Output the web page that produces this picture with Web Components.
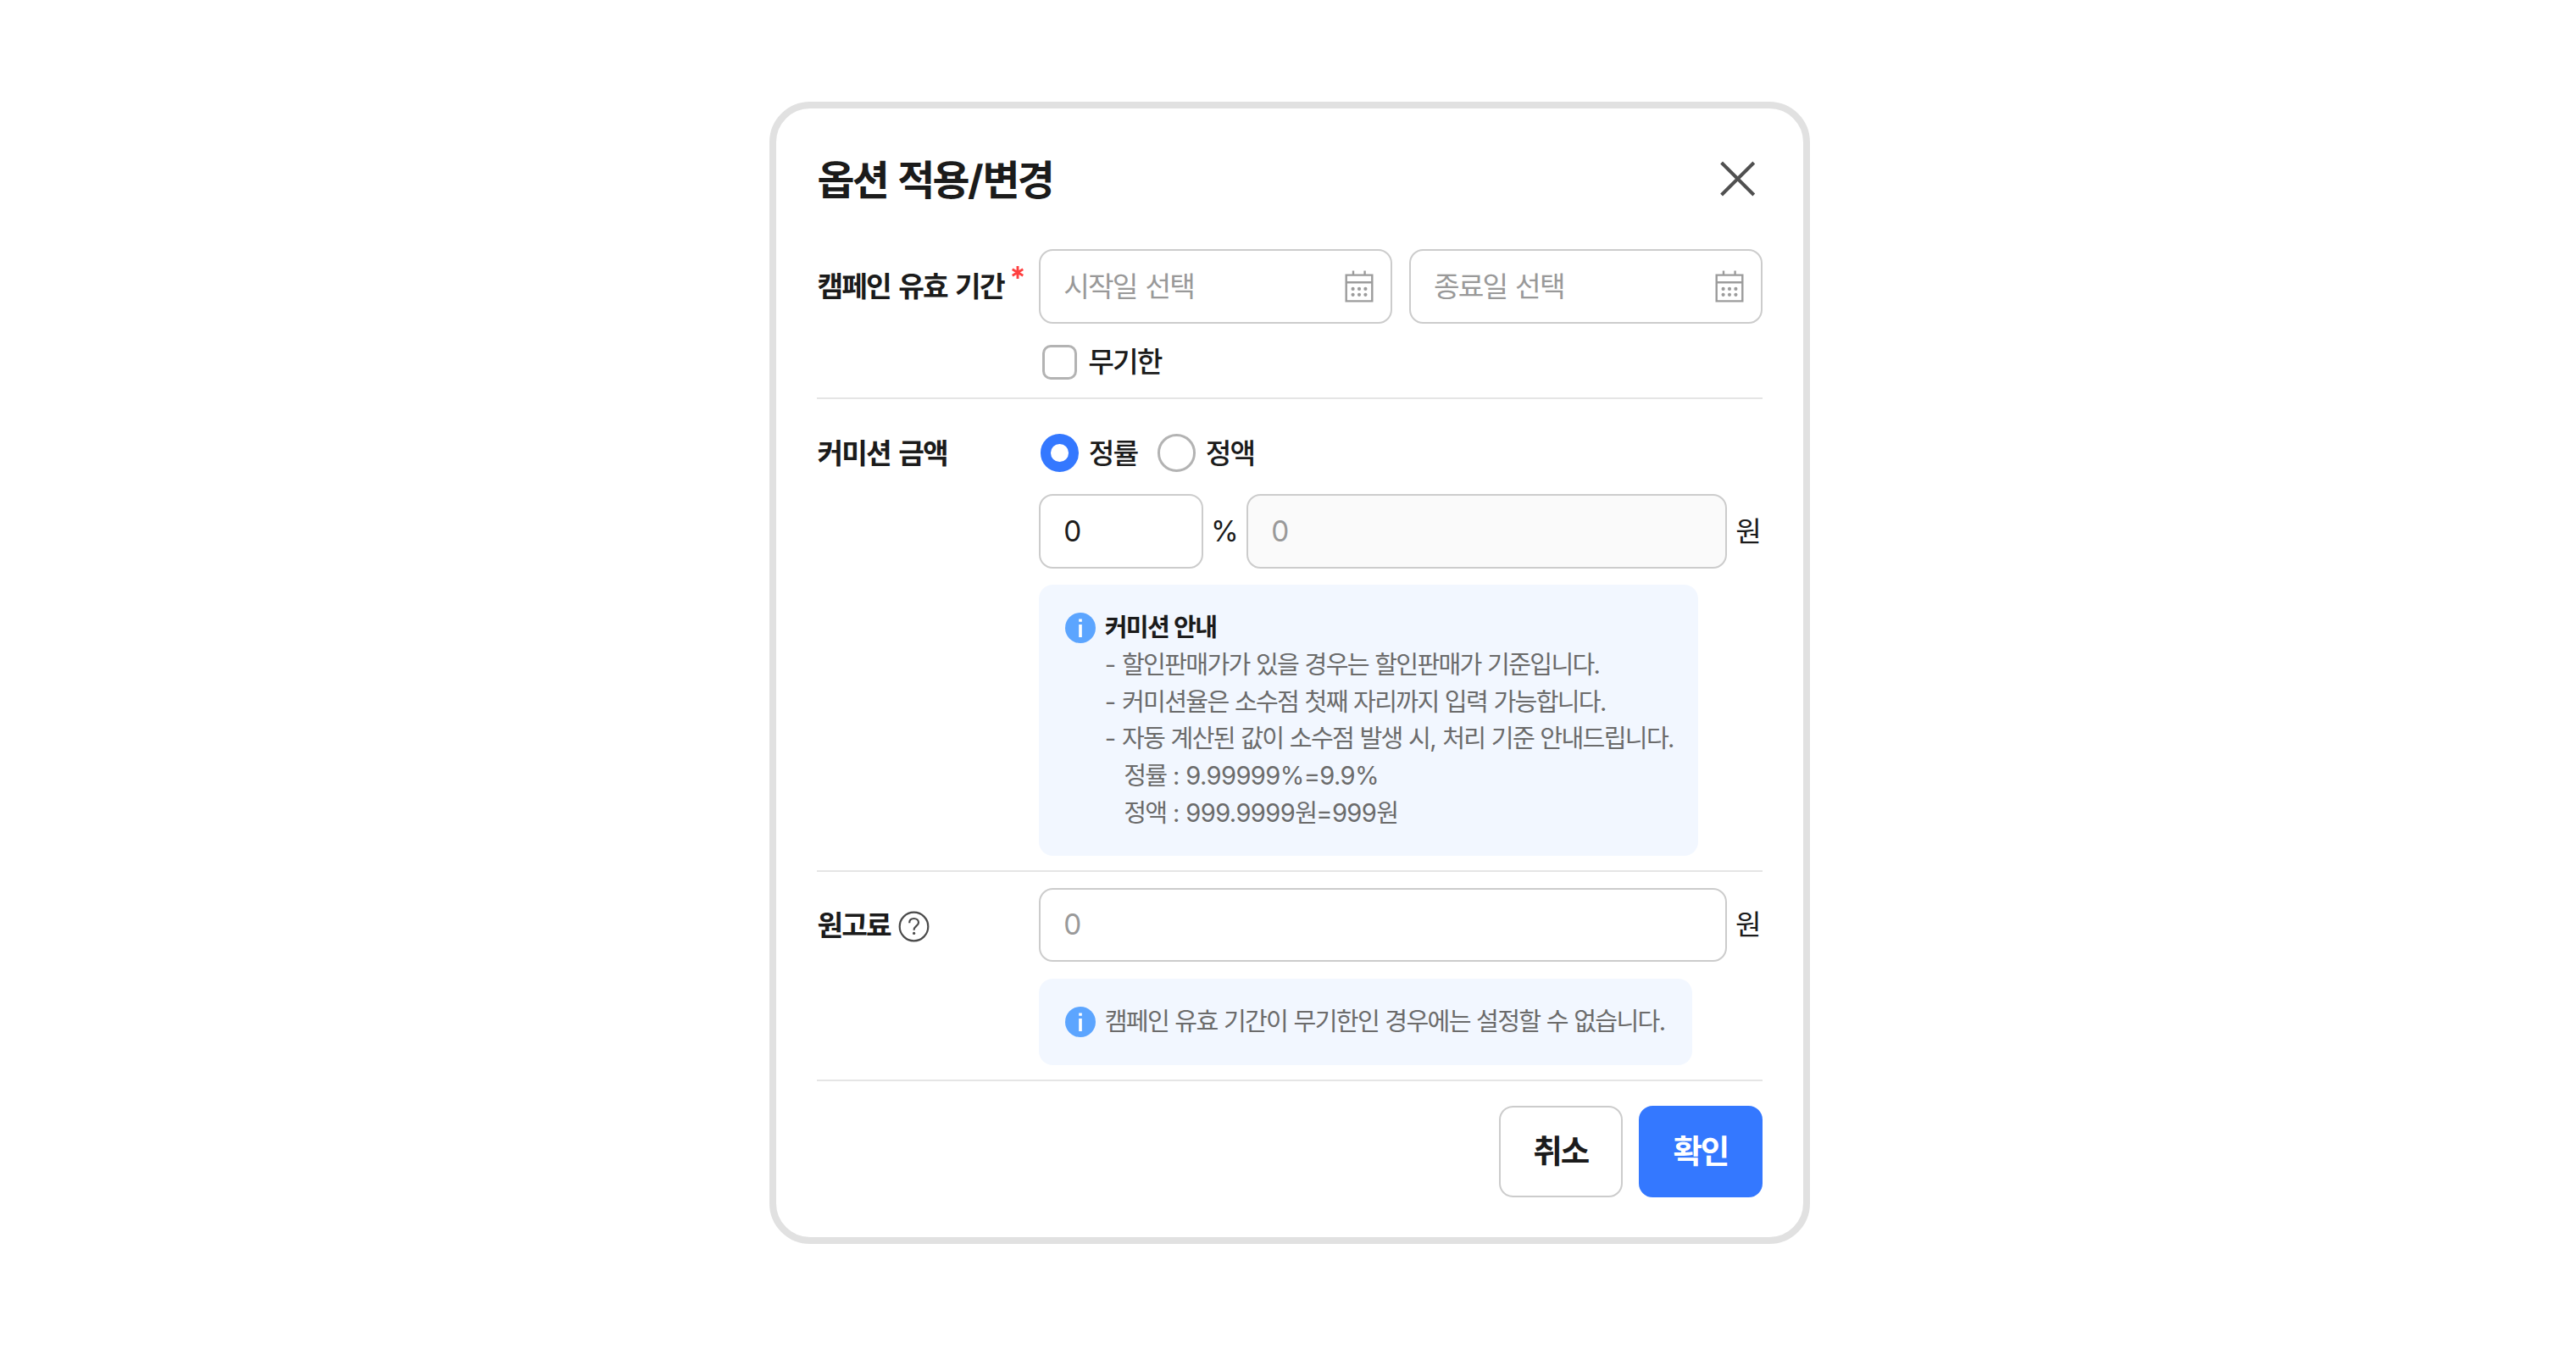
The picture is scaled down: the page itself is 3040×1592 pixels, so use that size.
<!DOCTYPE html>
<html lang="ko">
<head>
<meta charset="utf-8">
<title>옵션 적용/변경</title>
<style>
    body {
        display: flex;
        justify-content: center;
        align-items: flex-start;
        box-sizing: border-box;
        min-height: 1592px;
        margin: 0;
        padding: 120px 0 0 4px;
        background: #FFFFFF;
        color: #1B1B1B;
        font-family: Inter, "Noto Sans CJK KR", sans-serif;
        font-size: 33.33px;
    }

    .title { padding-top: 3px; font-size: 47.9px; font-weight: 700; line-height: 60px; }
    .label { font-weight: 700; --space: 0.1em; }

    .line { display: flex; align-items: center; }
    .dates { gap: 20px; }
    .radios { gap: 24px; }

    .period { --label-top: 19px; height: 175px; }
    .unlimited { margin: 23px 0 0 4px; }

    .commission { --label-top: 39px; height: 556px; }
    .radios { margin: 41px 0 0 2px; }
    .amounts { margin-top: 26px; }
    .rate { width: 193.5px; }
    .percent { width: 51.5px; text-align: center; }
    .amounts .amount { width: 567px; }
    .fee .amount { width: 811.8px; }
    .won { margin-left: 10px; }
    .guide { width: 778px; height: 320.3px; margin-top: 19px; }
    .head { color: #1B1B1B; font-weight: 700; }
    .sub { padding-left: 22.5px; }

    .fee { --label-top: 38px; height: 245px; }
    .fee .line { margin-top: 18.5px; }
    .notice { width: 771px; height: 102px; margin-top: 19.5px; }
</style>
</head>
<body>
<option-dialog>
    <ko-text slot="title" class="title">옵션 적용<i>/</i>변경</ko-text>

    <form-row class="period">
        <ko-text slot="label" class="label">캠페인 유효 기간</ko-text>
        <required-mark slot="label"></required-mark>
        <div class="line dates">
            <date-input><ko-text>시작일 선택</ko-text></date-input>
            <date-input><ko-text>종료일 선택</ko-text></date-input>
        </div>
        <choice-item class="unlimited" type="checkbox"><ko-text>무기한</ko-text></choice-item>
    </form-row>

    <form-row class="commission">
        <ko-text slot="label" class="label">커미션 금액</ko-text>
        <div class="line radios">
            <choice-item type="radio" checked><ko-text>정률</ko-text></choice-item>
            <choice-item type="radio"><ko-text>정액</ko-text></choice-item>
        </div>
        <div class="line amounts">
            <text-input class="rate">0</text-input>
            <span class="percent">%</span>
            <text-input class="amount" disabled>0</text-input>
            <ko-text class="won">원</ko-text>
        </div>
        <info-box class="guide">
            <ko-text class="head">커미션 안내</ko-text>
            <ko-text><i>- </i>할인판매가가 있을 경우는 할인판매가 기준입니다<i>.</i></ko-text>
            <ko-text><i>- </i>커미션율은 소수점 첫째 자리까지 입력 가능합니다<i>.</i></ko-text>
            <ko-text><i>- </i>자동 계산된 값이 소수점 발생 시<i>,</i> 처리 기준 안내드립니다<i>.</i></ko-text>
            <ko-text class="sub">정률<i> : 9.99999%=9.9%</i></ko-text>
            <ko-text class="sub">정액<i> : 999.9999</i>원<i>=999</i>원</ko-text>
        </info-box>
    </form-row>

    <form-row class="fee">
        <ko-text slot="label" class="label">원고료</ko-text>
        <help-icon slot="label"></help-icon>
        <div class="line">
            <text-input class="amount" placeholder>0</text-input>
            <ko-text class="won">원</ko-text>
        </div>
        <info-box class="notice">
            <ko-text>캠페인 유효 기간이 무기한인 경우에는 설정할 수 없습니다<i>.</i></ko-text>
        </info-box>
    </form-row>

    <dialog-button slot="actions"><ko-text>취소</ko-text></dialog-button>
    <dialog-button slot="actions" primary><ko-text>확인</ko-text></dialog-button>
</option-dialog>

<script>
    function define (name, html) {
        const template = document.createElement('template')
        template.innerHTML = html

        customElements.define(name, class extends HTMLElement {
            constructor () {
                super()
                this.attachShadow({ mode: 'open' })
                this.shadowRoot.appendChild(template.content.cloneNode(true))
            }
        })
    }

    // hangul is set tight, latin parts in <i> are nearly normal
    define('ko-text', `
        <style>
            :host {
                display: block;
                white-space: nowrap;
                line-height: var(--line, 50px);
                letter-spacing: var(--tight, -0.056em);
                word-spacing: var(--space, 0.07em);
            }

            ::slotted(i) {
                font-style: normal;
                letter-spacing: -0.022em;
                word-spacing: 0;
            }
        </style>
        <slot></slot>
    `)

    define('option-dialog', `
        <style>
            :host {
                display: flex;
                flex-direction: column;
                box-sizing: border-box;
                width: 1228px;
                height: 1348px;
                padding: 0 48.4px;
                border: 8px solid #E1E1E1;
                border-radius: 48px;
                background: #FFFFFF;
            }

            header {
                display: flex;
                justify-content: space-between;
                align-items: center;
                height: 166px;
            }

            header svg {
                margin-right: 7px;
            }

            footer {
                display: flex;
                justify-content: flex-end;
                gap: 19.5px;
                margin-top: 29px;
            }
        </style>
        <header>
            <slot name="title"></slot>
            <svg width="44" height="44" viewBox="0 0 44 44" fill="none" stroke="#505050" stroke-width="4">
                <path d="M2.6 3L40.8 41M40.8 3L2.6 41"/>
            </svg>
        </header>
        <slot></slot>
        <footer><slot name="actions"></slot></footer>
    `)

    define('form-row', `
        <style>
            :host {
                display: flex;
                align-items: flex-start;
                border-bottom: 2.1px solid #E5E5E5;
            }

            .label {
                display: flex;
                flex: none;
                width: 261.8px;
                padding-top: var(--label-top);
            }

            .fields {
                flex: 1;
            }
        </style>
        <div class="label"><slot name="label"></slot></div>
        <div class="fields"><slot></slot></div>
    `)

    define('required-mark', `
        <style>
            :host {
                display: block;
                margin: 1px 0 0 9px;
            }

            svg { display: block; }
        </style>
        <svg width="14" height="15" viewBox="0 0 14 15" fill="none" stroke="#FF4040" stroke-width="2.9">
            <path d="M7 0V15M0.7 3.8L13.3 11.2M13.3 3.8L0.7 11.2"/>
        </svg>
    `)

    define('help-icon', `
        <style>
            :host {
                display: block;
                margin: 8px 0 0 9px;
            }

            svg { display: block; }
        </style>
        <svg width="37" height="37" viewBox="0 0 37 37" fill="none" stroke="#4A4A4A" stroke-width="2.2">
            <circle cx="18.5" cy="18.5" r="16.8"/>
            <path d="M13.2 14.3C13.2 10.8 15.5 9 18.6 9C21.7 9 24 10.9 24 13.7C24 17.8 18.6 17.7 18.6 22.8"/>
            <circle cx="18.6" cy="26.4" r="1.6" fill="#4A4A4A" stroke="none"/>
        </svg>
    `)

    const box = `
        display: flex;
        align-items: center;
        box-sizing: border-box;
        height: 87.5px;
        padding: 0 27px;
        border: 2.1px solid #CCCCCC;
        border-radius: 16.5px;
        background: #FFFFFF;
    `

    define('text-input', `
        <style>
            :host { ${box} }
            :host([placeholder]) { color: #999999; }
            :host([disabled]) { color: #999999; background: #FAFAFA; }
        </style>
        <slot></slot>
    `)

    define('date-input', `
        <style>
            :host {
                ${box}
                justify-content: space-between;
                width: 416.7px;
                padding-right: 19.5px;
                color: #999999;
            }
        </style>
        <slot></slot>
        <svg width="34" height="38" viewBox="0 0 34 38" fill="none" stroke="#9C9C9C" stroke-width="2.4">
            <path d="M1.7 5.6H32.3V36.4H1.7ZM1.7 14.3H32.3M10 0.5V5.6M23.6 0.5V5.6"/>
            <g fill="#9C9C9C" stroke="none">
                <circle cx="9.6" cy="21.9" r="2.1"/><circle cx="17" cy="21.9" r="2.1"/><circle cx="24.4" cy="21.9" r="2.1"/>
                <circle cx="9.6" cy="28.8" r="2.1"/><circle cx="17" cy="28.8" r="2.1"/><circle cx="24.4" cy="28.8" r="2.1"/>
            </g>
        </svg>
    `)

    define('choice-item', `
        <style>
            :host {
                display: flex;
                align-items: center;
                gap: 12px;
                height: 45px;
                font-weight: 500;
            }

            .mark {
                box-sizing: border-box;
                width: 44.5px;
                height: 44.5px;
                border: 3px solid #B3B3B3;
                border-radius: 50%;
            }

            :host([type=checkbox]) { gap: 13px; }

            :host([type=checkbox]) .mark {
                width: 41px;
                height: 41px;
                border-radius: 10px;
            }

            :host([checked]) .mark {
                border: 12.2px solid #3478FF;
            }
        </style>
        <span class="mark"></span>
        <slot></slot>
    `)

    define('info-box', `
        <style>
            :host {
                --line: 43.75px;
                --tight: -0.059em;
                --space: 0.03em;
                display: flex;
                box-sizing: border-box;
                gap: 10.5px;
                padding: 29.5px 31px;
                border-radius: 16.5px;
                background: #F2F7FF;
                color: #6B6B6B;
                font-size: 29.17px;
            }

            svg { flex: none; margin-top: 3.5px; }
        </style>
        <svg width="36" height="36" viewBox="0 0 36 36">
            <circle cx="18" cy="18" r="18" fill="#5CA5FF"/>
            <path d="M16.2 7.4H19.8V10.8H16.2ZM16.2 14H19.8V29H16.2Z" fill="#FFFFFF"/>
        </svg>
        <div><slot></slot></div>
    `)

    define('dialog-button', `
        <style>
            :host {
                --line: 56px;
                display: flex;
                align-items: center;
                justify-content: center;
                box-sizing: border-box;
                width: 145.6px;
                height: 107.5px;
                border: 2.1px solid #CCCCCC;
                border-radius: 16.5px;
                font-size: 37.5px;
                font-weight: 700;
            }

            :host([primary]) {
                border-color: #3478FF;
                background: #3478FF;
                color: #FFFFFF;
            }
        </style>
        <slot></slot>
    `)
</script>
</body>
</html>
